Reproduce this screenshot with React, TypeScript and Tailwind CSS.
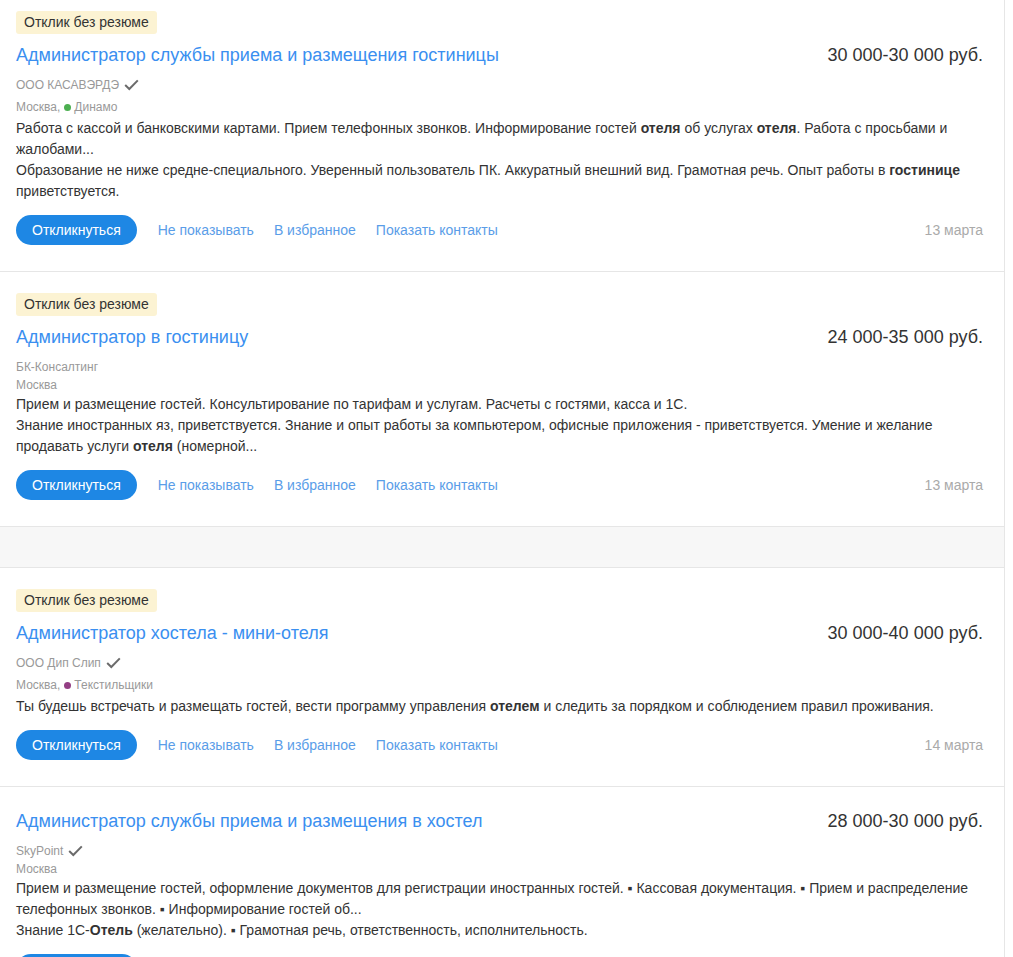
import React from "react"

type Metro = { name: string; color: string }

type Vacancy = {
    badge?: boolean
    title: string
    salary: string
    company: string
    verified?: boolean
    city: string
    metro?: Metro
    paragraphs: React.ReactNode[]
    date?: string
}

const vacancies: Vacancy[] = [
    {
        badge: true,
        title: "Администратор службы приема и размещения гостиницы",
        salary: "30 000-30 000 руб.",
        company: "ООО КАСАВЭРДЭ",
        verified: true,
        city: "Москва",
        metro: { name: "Динамо", color: "bg-[#4caf50]" },
        paragraphs: [
            <>Работа с кассой и банковскими картами. Прием телефонных звонков. Информирование гостей <b>отеля</b> об услугах <b>отеля</b>. Работа с просьбами и жалобами...</>,
            <>Образование не ниже средне-специального. Уверенный пользователь ПК. Аккуратный внешний вид. Грамотная речь. Опыт работы в <b>гостинице</b> приветствуется.</>,
        ],
        date: "13 марта",
    },
    {
        badge: true,
        title: "Администратор в гостиницу",
        salary: "24 000-35 000 руб.",
        company: "БК-Консалтинг",
        city: "Москва",
        paragraphs: [
            <>Прием и размещение гостей. Консультирование по тарифам и услугам. Расчеты с гостями, касса и 1С.</>,
            <>Знание иностранных яз, приветствуется. Знание и опыт работы за компьютером, офисные приложения - приветствуется. Умение и желание продавать услуги <b>отеля</b> (номерной...</>,
        ],
        date: "13 марта",
    },
    {
        badge: true,
        title: "Администратор хостела - мини-отеля",
        salary: "30 000-40 000 руб.",
        company: "ООО Дип Слип",
        verified: true,
        city: "Москва",
        metro: { name: "Текстильщики", color: "bg-[#943f84]" },
        paragraphs: [
            <>Ты будешь встречать и размещать гостей, вести программу управления <b>отелем</b> и следить за порядком и соблюдением правил проживания.</>,
        ],
        date: "14 марта",
    },
    {
        title: "Администратор службы приема и размещения в хостел",
        salary: "28 000-30 000 руб.",
        company: "SkyPoint",
        verified: true,
        city: "Москва",
        paragraphs: [
            <>Прием и размещение гостей, оформление документов для регистрации иностранных гостей. ▪ Кассовая документация. ▪ Прием и распределение телефонных звонков. ▪ Информирование гостей об...</>,
            <>Знание 1С-<b>Отель</b> (желательно). ▪ Грамотная речь, ответственность, исполнительность.</>,
        ],
        date: "14 марта",
    },
]

const Check = () => (
    <svg width="15" height="12" viewBox="0 0 15 12" className="ml-[5px] block" fill="none">
        <path d="M1.2 6 L5.3 10 L13.8 1.4" stroke="#6b6b6b" strokeWidth="2" />
    </svg>
)

const VacancyCard: React.FC<{ v: Vacancy; first?: boolean }> = ({ v, first }) => (
    <div className={`${first ? "pt-[11px]" : "pt-[21px]"} pb-[26px] pl-4 pr-[21px] border-b border-[#e6e6e6]`}>
        {v.badge && (
            <div className="w-fit bg-[#fcf3d3] rounded-[3px] px-2 text-sm leading-[23px] text-[#333]">
                Отклик без резюме
            </div>
        )}
        <div className={`flex justify-between items-center ${v.badge ? "mt-2" : ""}`}>
            <a className="text-lg leading-[26px] text-[#3a8ff0] cursor-pointer">{v.title}</a>
            <span className="text-lg leading-[26px] text-[#333]">{v.salary}</span>
        </div>
        <div className="mt-2 flex items-center h-[18px] text-xs leading-[18px] text-[#999]">
            {v.company}
            {v.verified && <Check />}
        </div>
        {v.metro ? (
            <div className="mt-[2px] flex items-center h-[22px] text-xs leading-[22px] text-[#999]">
                {v.city},
                <span className="w-1" />
                <span className={`mr-[3px] w-[7px] h-[7px] rounded-full ${v.metro.color}`} />
                {v.metro.name}
            </div>
        ) : (
            <div className="h-[18px] text-xs leading-[18px] text-[#999]">{v.city}</div>
        )}
        <div className="text-sm leading-[21px] text-[#333]">
            {v.paragraphs.map((p, i) => (
                <p key={i}>{p}</p>
            ))}
        </div>
        <div className="mt-[13px] flex items-center h-[30px] text-sm leading-5">
            <button className="h-[30px] px-4 rounded-full bg-[#1e87e4] text-white">Откликнуться</button>
            <a className="ml-[21px] text-[#5a9de8]">Не показывать</a>
            <a className="ml-5 text-[#5a9de8]">В избранное</a>
            <a className="ml-5 text-[#5a9de8]">Показать контакты</a>
            <span className="ml-auto text-[#aaa]">{v.date}</span>
        </div>
    </div>
)

export default function App() {
    return (
        <div className="min-h-screen bg-white font-['Liberation_Sans',Arial,sans-serif]">
            <div className="w-[1005px] border-r border-[#e6e6e6] min-h-screen">
                <VacancyCard v={vacancies[0]} first />
                <VacancyCard v={vacancies[1]} />
                <div className="h-[41px] bg-[#f7f7f7] border-b border-[#e6e6e6]" />
                <VacancyCard v={vacancies[2]} />
                <VacancyCard v={vacancies[3]} />
            </div>
        </div>
    )
}
